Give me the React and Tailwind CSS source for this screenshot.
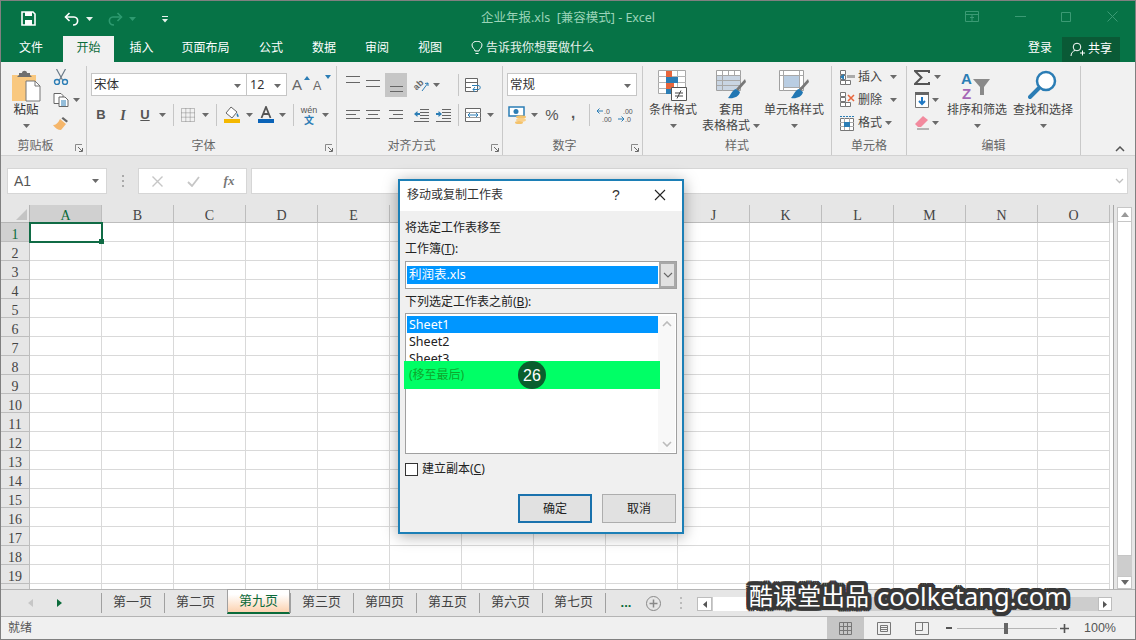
import React from "react";

const Caret = ({ c = "#6a6a6a" }) => (
  <svg width="7" height="4" viewBox="0 0 7 4" className="shrink-0"><path d="M0 0h7L3.500 4z" fill={c} /></svg>
);
const Box = ({ className = "", children }) => (
  <div className={`flex items-center justify-center shrink-0 ${className}`}>{children}</div>
);
const Sep = ({ className = "" }) => <div className={`w-px h-[22px] bg-[#c6c6c6] shrink-0 ${className}`} />;
const Launcher = () => (
  <svg width="8" height="8" viewBox="0 0 8 8">
    <path d="M0.500 7V0.500H7" fill="none" stroke="#8a8a8a" />
    <path d="M3 3l4 4M7.500 4v3.500H4" fill="none" stroke="#6a6a6a" />
  </svg>
);
const Lines = ({ ys, c = "#666" }) => (
  <svg width="16" height="18" viewBox="0 0 16 18">
    {ys.map(([y, a, b], i) => <path key={i} d={`M${a} ${y}.5H${b}`} stroke={c} />)}
  </svg>
);
const Group = ({ className, label, launcher, children }) => (
  <div className={`flex flex-col shrink-0 border-r border-[#c9c9c9] ${className}`}>
    <div className="h-[71px]">{children}</div>
    <div className="h-[15px] flex items-center text-[12px] leading-[15px] text-[#666]">
      <div className="flex-1 text-center pt-px">{label}</div>
      {launcher && <div className="w-[16px] pt-[6px] pl-[5px] flex justify-start"><Launcher /></div>}
    </div>
  </div>
);
const Big = ({ className, icon, l1, l2 }) => (
  <div className={`flex flex-col items-center pt-[4px] shrink-0 ${className}`}>
    <div className="h-[32px] flex items-start justify-center">{icon}</div>
    <div className="text-[12px] leading-[16px] text-[#444] whitespace-nowrap">{l1}</div>
    {l2 ? (
      <div className="text-[12px] leading-[16px] text-[#444] whitespace-nowrap flex items-center gap-[3px]">{l2}<Caret /></div>
    ) : (
      <div className="h-[16px] flex items-center"><Caret /></div>
    )}
  </div>
);

const CondIcon = () => (
  <svg width="32" height="32" viewBox="0 0 32 32">
    <path d="M1.500 .5h27v23h-27z" fill="#fff" stroke="#a8a8a8" />
    <path d="M1 6.500h28M1 12.500h28M1 18.500h28M9.500 1v23M20.500 1v23" stroke="#b5b5b5" fill="none" />
    <path d="M9 1h6v6H9z" fill="#e8663c" /><path d="M9 7h12v6H9z" fill="#2b7db5" /><path d="M9 13h8v6H9z" fill="#e8663c" /><path d="M9 19h5v5H9z" fill="#2b7db5" />
    <path d="M14.500 17.500h15v13h-15z" fill="#fff" stroke="#555" />
    <path d="M18 23h8M18 26h8M24 20.500l-4 8" stroke="#444" fill="none" />
  </svg>
);
const TableIcon = ({ full }) => (
  <svg width="30" height="30" viewBox="0 0 30 30">
    <path d="M.5 .5h24v20H.5z" fill="#fff" stroke="#a0a0a0" />
    {full ? <path d="M1 5h23v15H1z" fill="#c9d5e3" /> : <path d="M5 6h15v11H5z" fill="#b9cde2" />}
    {full
      ? <path d="M1 5.500h24M1 10.500h24M1 15.500h24M6.500 1v20M12.500 1v4M18.500 1v4" stroke="#a8a8a8" fill="none" />
      : <path d="M1 5.500h24M5 17.500h20M4.500 1v20M20.500 1v20" stroke="#a8a8a8" fill="none" />}
    <path d="M29 9l-9 10 2 2 8-9z" fill="#777" />
    <path d="M20 19c-4 1-5 6-8 9 5 1 11-1 12-6z" fill="#2277b3" />
  </svg>
);

const Ribbon = () => (
  <div className="h-[94px] shrink-0 bg-[#f1f1f1] border-b border-[#d2d2d2] flex pt-[4px]">
    <Group className="w-[86px]" label="剪贴板" launcher>
      <div className="flex">
        <div className="w-[50px] flex flex-col items-center pt-[4px]">
          <div className="h-[32px]">
            <svg width="30" height="32" viewBox="0 0 30 32">
              <path d="M1 5h24v26H1z" fill="#f9c87f" />
              <path d="M8 5V3h3c0-3 5-3 5 0h3v2l2 2H6z" fill="#6f6f6f" />
              <path d="M15 11h9l5 5v15H15z" fill="#fff" stroke="#777" />
              <path d="M24 11v5h5" fill="none" stroke="#777" />
            </svg>
          </div>
          <div className="text-[12.500px] leading-[16px] text-[#333]">粘贴</div>
          <div className="h-[16px] flex items-center"><Caret /></div>
        </div>
        <div className="flex flex-col">
          <Box className="h-[22px] w-[20px]">
            <svg width="16" height="16" viewBox="0 0 16 16"><path d="M3.500 0l6 11M12.500 0l-6 11" stroke="#6a7a88" strokeWidth="1.200" /><circle cx="4" cy="13" r="2.500" fill="none" stroke="#2b7db5" strokeWidth="1.400" /><circle cx="12" cy="13" r="2.500" fill="none" stroke="#2b7db5" strokeWidth="1.400" /></svg>
          </Box>
          <div className="h-[23px] flex items-center">
            <Box className="w-[20px]">
              <svg width="16" height="14" viewBox="0 0 16 14"><path d="M1 .5h7l2 2v8H1z" fill="#fff" stroke="#666" /><path d="M6 4h6l3 3v6.500H6z" fill="#fff" stroke="#666" /><path d="M8 8h5M8 10h5M8 12h5" stroke="#2b7db5" /></svg>
            </Box>
            <div className="ml-[2px]"><Caret /></div>
          </div>
          <Box className="h-[23px] w-[20px]">
            <svg width="16" height="14" viewBox="0 0 16 14"><path d="M10 1l5 4-1.500 1.500-5-4z" fill="#666" /><path d="M7 3l6 5-5 6c-3 0-6-2-8-5 3 0 5-2 7-6z" fill="#f5b66a" /></svg>
          </Box>
        </div>
      </div>
    </Group>

    <Group className="w-[250px]" label="字体" launcher>
      <div className="pt-[7px] flex flex-col">
        <div className="h-[23px] flex items-center ml-[4px]">
          <div className="w-[156px] h-[23px] bg-white border border-[#c6c6c6] flex items-center pl-[2px] pr-[5px] pt-[2px] text-[12.500px] text-[#333] justify-between">
            宋体<Caret />
          </div>
          <div className="w-[40px] h-[23px] bg-white border border-[#c6c6c6] border-l-0 flex items-center pl-[3px] pr-[5px] pt-[2px] text-[12.500px] text-[#333] justify-between">
            12<Caret />
          </div>
          <div className="ml-[5px] flex items-center gap-[3px] font-['Liberation_Sans',sans-serif]">
            <div className="w-[18px] relative text-[15px] leading-[20px] text-[#666]">A<svg width="6" height="4" viewBox="0 0 6 4" className="absolute top-[1px] right-0"><path d="M0 4L3 0l3 4z" fill="#2b7db5" /></svg></div>
            <div className="w-[18px] relative text-[12.500px] leading-[20px] pt-[2px] text-[#666]">A<svg width="6" height="4" viewBox="0 0 6 4" className="absolute top-[1px] right-0"><path d="M0 0h6L3 4z" fill="#2b7db5" /></svg></div>
          </div>
        </div>
        <div className="h-[24px] mt-[7px] flex items-center ml-[3px] text-[#555]">
          <Box className="w-[22px] font-['Liberation_Sans',sans-serif] font-bold text-[13px]">B</Box>
          <Box className="w-[22px] font-['Liberation_Serif',serif] italic font-bold text-[14px]">I</Box>
          <Box className="w-[22px] font-['Liberation_Sans',sans-serif] font-bold text-[13px] underline">U</Box>
          <Box className="w-[12px]"><Caret /></Box>
          <Sep className="ml-[5px]" />
          <Box className="w-[22px] ml-[3px]">
            <svg width="14" height="14" viewBox="0 0 14 14"><path d="M.5.500h13v13H.5zM.5 4.800h13M.5 9.200h13M4.800.5v13M9.200.5v13" fill="none" stroke="#888" strokeDasharray="1 1" /></svg>
          </Box>
          <Box className="w-[12px]"><Caret /></Box>
          <Sep className="ml-[5px]" />
          <Box className="w-[22px] ml-[4px]">
            <svg width="16" height="18" viewBox="0 0 16 18"><path d="M7 1l6 5-5 6-6-5z" fill="#fff" stroke="#666" /><path d="M13 7c2 2 2 4 1 4s-2-2-1-4z" fill="#2b7db5" /><path d="M0 13h16v4H0z" fill="#f4b800" /></svg>
          </Box>
          <Box className="w-[12px]"><Caret /></Box>
          <Box className="w-[22px]">
            <svg width="16" height="18" viewBox="0 0 16 18"><path d="M3.500 12L8 1l4.500 11M5 8h6" fill="none" stroke="#555" strokeWidth="1.800" /><path d="M0 13h16v4H0z" fill="#0a63b8" /></svg>
          </Box>
          <Box className="w-[11px]"><Caret /></Box>
          <Sep className="ml-[5px]" />
          <Box className="w-[22px] ml-[4px]">
            <div className="flex flex-col items-center text-[9px] leading-[9px] text-[#555]"><span className="font-['Liberation_Sans',sans-serif]">wén</span><span className="text-[#2b7db5] text-[10px] leading-[10px] font-bold">文</span></div>
          </Box>
          <Box className="w-[11px]"><Caret /></Box>
        </div>
      </div>
    </Group>

    <Group className="w-[166px]" label="对齐方式" launcher>
      <div className="pt-[7px] flex flex-col">
        <div className="h-[24px] flex items-center">
          <Box className="w-[20px] ml-[6px]"><Lines ys={[[0, 1, 15], [6, 1, 15]]} /></Box>
          <Box className="w-[20px]"><Lines ys={[[4, 1, 15], [10, 1, 15]]} /></Box>
          <Box className="w-[22px] h-[24px] ml-[2px] bg-[#c6c6c6]"><Lines ys={[[10, 2, 15], [15, 2, 15]]} /></Box>
          <Box className="w-[20px] ml-[4px]">
            <svg width="18" height="16" viewBox="0 0 18 16"><text x="1" y="11" fontSize="9" fontWeight="bold" fill="#666" fontFamily="Liberation Sans" transform="rotate(-45 6 8)">ab</text><path d="M10 14l6-8M16 6l-3 .5M16 6v3" stroke="#2b7db5" fill="none" /></svg>
          </Box>
          <Box className="w-[10px]"><Caret /></Box>
          <Sep className="ml-[17px]" />
          <Box className="w-[20px] ml-[4px]">
            <svg width="18" height="16" viewBox="0 0 18 16"><path d="M1.500 1.500h12v13h-12z" fill="#fff" stroke="#666" /><path d="M1 5.500h13M1 10.500h6" stroke="#666" /><path d="M8 8.500h6c3 0 3 4 0 4H9M11 10l-2 2.500 2 2.500" fill="none" stroke="#2b7db5" /></svg>
          </Box>
        </div>
        <div className="h-[24px] mt-[6px] flex items-center">
          <Box className="w-[20px] ml-[6px]"><Lines ys={[[4, 1, 15], [8, 1, 11], [12, 1, 15]]} /></Box>
          <Box className="w-[20px]"><Lines ys={[[4, 1, 15], [8, 3, 13], [12, 1, 15]]} /></Box>
          <Box className="w-[20px] ml-[3px]"><Lines ys={[[4, 1, 15], [8, 5, 15], [12, 1, 15]]} /></Box>
          <Box className="w-[20px] ml-[5px]">
            <svg width="16" height="14" viewBox="0 0 16 14"><path d="M7 1.500h9M7 4.500h9M7 7.500h9M7 10.500h9M1 13.500h15" stroke="#666" /><path d="M1 6l3.500-3v2H7v2H4.500v2z" fill="#2b7db5" /></svg>
          </Box>
          <Box className="w-[20px] ml-[2px]">
            <svg width="16" height="14" viewBox="0 0 16 14"><path d="M7 1.500h9M7 4.500h9M7 7.500h9M7 10.500h9M1 13.500h15" stroke="#666" /><path d="M7 6L3.500 3v2H1v2h2.500v2z" fill="#2b7db5" /></svg>
          </Box>
          <Sep className="ml-[5px]" />
          <Box className="w-[20px] ml-[4px]">
            <svg width="16" height="16" viewBox="0 0 16 16"><path d="M.5 1.500h15v13H.5z" fill="#fff" stroke="#666" /><path d="M.5 5.500h15M.5 10.500h15" stroke="#999" /><path d="M3 8h10M3 8l2-2M3 8l2 2M13 8l-2-2M13 8l-2 2" stroke="#2b7db5" fill="none" /></svg>
          </Box>
          <Box className="w-[12px] ml-[1px]"><Caret /></Box>
        </div>
      </div>
    </Group>

    <Group className="w-[140px]" label="数字" launcher>
      <div className="pt-[7px] flex flex-col">
        <div className="w-[130px] h-[23px] ml-[4px] bg-white border border-[#c6c6c6] flex items-center justify-between pl-[2px] pr-[5px] pt-[2px] text-[12.500px] text-[#333]">常规<Caret /></div>
        <div className="h-[24px] mt-[7px] flex items-center text-[#555]">
          <Box className="w-[22px] ml-[4px]">
            <svg width="20" height="18" viewBox="0 0 20 18"><path d="M1 1h15v9H1z" fill="#fff" stroke="#2b7db5" strokeWidth="1.500" /><circle cx="8" cy="5.500" r="2.500" fill="#2b7db5" /><ellipse cx="13" cy="11" rx="5" ry="1.800" fill="#f4c26b" /><ellipse cx="13" cy="14" rx="5" ry="1.800" fill="#f9d08a" /><ellipse cx="11" cy="16.500" rx="4" ry="1.500" fill="#f4c26b" /></svg>
          </Box>
          <Box className="w-[10px]"><Caret /></Box>
          <Box className="w-[20px] ml-[3px] text-[15px] font-['Liberation_Sans',sans-serif]">%</Box>
          <Box className="w-[20px] ml-[1px] text-[15px] font-bold font-['Liberation_Sans',sans-serif] pb-[3px]">,</Box>
          <Sep className="ml-[6px]" />
          <Box className="w-[20px] ml-[5px]">
            <svg width="18" height="16" viewBox="0 0 18 16"><path d="M7 4H1M1 4l2.500-2.500M1 4l2.500 2.500" stroke="#2b7db5" fill="none" /><text x="8" y="7" fontSize="7" fill="#555" fontFamily="Liberation Sans">.0</text><text x="6" y="15" fontSize="7" fill="#555" fontFamily="Liberation Sans">.00</text></svg>
          </Box>
          <Box className="w-[20px] ml-[1px]">
            <svg width="18" height="16" viewBox="0 0 18 16"><path d="M1 12h6M7 12L4.500 9.500M7 12l-2.500 2.500" stroke="#2b7db5" fill="none" /><text x="6" y="7" fontSize="7" fill="#555" fontFamily="Liberation Sans">.00</text><text x="8" y="15" fontSize="7" fill="#555" fontFamily="Liberation Sans">.0</text></svg>
          </Box>
        </div>
      </div>
    </Group>

    <Group className="w-[189px]" label="样式">
      <div className="flex">
        <Big className="w-[60px]" icon={<CondIcon />} l1="条件格式" />
        <Big className="w-[56px]" icon={<TableIcon full />} l1="套用" l2="表格格式" />
        <Big className="w-[70px]" icon={<TableIcon />} l1="单元格样式" />
      </div>
    </Group>

    <Group className="w-[75px]" label="单元格">
      <div className="flex flex-col text-[12px] text-[#444]">
        <div className="h-[22px] flex items-center">
          <Box className="w-[16px] ml-[7px]"><svg width="16" height="15" viewBox="0 0 16 15"><path d="M1.500.5h5v4h-5zM1.500 5.500h5v4h-5zM1.500 10.500h5v4h-5zM6.500 10.500h5v4h-5z" fill="#fff" stroke="#777" /><path d="M8 5h8v3H8z" fill="#aaa" /><path d="M1 7l4-3v6z" fill="#2b7db5" /></svg></Box>
          <div className="ml-[3px] w-[24px]">插入</div><div className="ml-[8px]"><Caret /></div>
        </div>
        <div className="h-[23px] flex items-center">
          <Box className="w-[16px] ml-[7px]"><svg width="16" height="15" viewBox="0 0 16 15"><path d="M1.500.5h5v4h-5zM1.500 5.500h5v4h-5zM1.500 10.500h5v4h-5zM6.500 10.500h5v4h-5z" fill="#fff" stroke="#777" /><path d="M9 3l6 6M15 3l-6 6" stroke="#e8663c" strokeWidth="1.500" /></svg></Box>
          <div className="ml-[3px] w-[24px]">删除</div><div className="ml-[8px]"><Caret /></div>
        </div>
        <div className="h-[23px] flex items-center">
          <Box className="w-[16px] ml-[7px]"><svg width="16" height="16" viewBox="0 0 16 16"><path d="M1.500 3.500h13v12h-13z" fill="#fff" stroke="#777" /><path d="M1 7.500h14M1 11.500h14M5.500 3v12M10.500 3v12" stroke="#aaa" /><path d="M5 7h6v5H5z" fill="#2b7db5" /><path d="M1 1.500h14" stroke="#2b7db5" strokeDasharray="2 1" /></svg></Box>
          <div className="ml-[3px] w-[24px]">格式</div><div className="ml-[3px]"><Caret /></div>
        </div>
      </div>
    </Group>

    <Group className="w-[174px]" label="编辑">
      <div className="flex">
        <div className="ml-[5px] w-[36px] flex flex-col">
          <div className="h-[22px] flex items-center"><Box className="w-[20px]"><svg width="16" height="15" viewBox="0 0 16 15"><path d="M15 3V1H1l6.500 6.500L1 14h14v-2" fill="none" stroke="#555" strokeWidth="2" /></svg></Box><div className="ml-[2px]"><Caret /></div></div>
          <div className="h-[23px] flex items-center"><Box className="w-[20px]"><svg width="14" height="16" viewBox="0 0 14 16"><path d="M.5.500h13v15H.5z" fill="#fff" stroke="#777" /><path d="M0 0h14v3H0z" fill="#666" /><path d="M7 5v6M4 9l3 3 3-3" stroke="#1f78c4" strokeWidth="2" fill="none" /></svg></Box><Caret /></div>
          <div className="h-[23px] flex items-center"><Box className="w-[20px]"><svg width="16" height="15" viewBox="0 0 16 15"><path d="M1 9l8-8 5 4-7 7H4z" fill="#f28a9e" /><path d="M3 14h12" stroke="#777" /></svg></Box><Caret /></div>
        </div>
        <Big className="w-[58px]" l1="排序和筛选" icon={
          <svg width="32" height="32" viewBox="0 0 32 32">
            <text x="0" y="14" fontSize="15" fontWeight="bold" fill="#2b7db5" fontFamily="Liberation Sans">A</text>
            <text x="1" y="29" fontSize="15" fontWeight="bold" fill="#a566b5" fontFamily="Liberation Sans">Z</text>
            <path d="M12 9h17l-6 8v8h-4v-8z" fill="#8a8a8a" />
          </svg>
        } />
        <Big className="w-[74px]" l1="查找和选择" icon={
          <svg width="30" height="30" viewBox="0 0 30 30"><circle cx="18" cy="11" r="9" fill="#fff" stroke="#2b7db5" strokeWidth="2.500" /><path d="M11 18L2 27" stroke="#2b7db5" strokeWidth="4" strokeLinecap="round" /></svg>
        } />
      </div>
    </Group>

    <div className="flex-1 flex items-end justify-end pr-[10px] pb-[3px]">
      <svg width="10" height="6" viewBox="0 0 10 6"><path d="M1 5l4-4 4 4" fill="none" stroke="#555" strokeWidth="1.500" /></svg>
    </div>
  </div>
);

const cols = ["A", "B", "C", "D", "E", "J", "K", "L", "M", "N", "O"];
const hiddenBefore = 5;
const rows = Array.from({ length: 20 }, (_, i) => i + 1);

const Sheet = () => (
  <div className="h-[384px] shrink-0 flex bg-[#e6e6e6] font-['Liberation_Serif',serif] text-[14px] text-[#444]">
    <div className="w-[1113px] shrink-0 overflow-hidden bg-white border-r border-[#a8a8a8]">
      <div className="h-[18px] flex bg-[#e6e6e6]">
        <div className="w-[29px] border-r border-b border-[#b5b5b5] shrink-0 relative flex items-end justify-end p-[2px]">
          <svg width="11" height="11" viewBox="0 0 11 11"><path d="M11 0v11H0z" fill="#c4c4c4" /></svg>
        </div>
        {cols.map((c, i) => (
          <React.Fragment key={c}>
            {i === hiddenBefore && [0, 1, 2, 3].map((k) => <div key={k} className="w-[72px] shrink-0 border-r border-b border-[#bdbdbd]" />)}
            <div className={`w-[72px] shrink-0 border-r border-b border-[#bdbdbd] text-center leading-[21px] ${i === 0 ? "bg-[#d0d0d0] text-[#0b6b3a] border-b-[#a0a0a0]" : ""}`}>{c}</div>
          </React.Fragment>
        ))}
      </div>
      {rows.map((r) => (
        <div key={r} className="h-[19px] flex">
          <div className={`w-[29px] shrink-0 border-r border-b border-[#bdbdbd] text-center leading-[24px] ${r === 1 ? "bg-[#d0d0d0] text-[#0b6b3a]" : "bg-[#e6e6e6]"}`}>{r < 20 ? r : ""}</div>
          {Array.from({ length: 15 }, (_, i) => (
            <div key={i} className="w-[72px] shrink-0 border-r border-b border-[#d9d9d9] relative">
              {r === 1 && i === 0 && (
                <div className="absolute left-[-1px] top-[-1px] w-[74px] h-[21px] border-2 border-[#106b45] z-10">
                  <div className="absolute right-[-3px] bottom-[-3px] w-[5px] h-[5px] bg-[#106b45]" />
                </div>
              )}
            </div>
          ))}
        </div>
      ))}
    </div>
    <div className="flex-1 flex flex-col pl-[3px] pr-[3px] pt-[2px]">
      <Box className="h-[15px] bg-white border border-[#c6c6c6]"><svg width="8" height="5" viewBox="0 0 8 5"><path d="M0 5l4-5 4 5z" fill="#999" /></svg></Box>
      <div className="h-[334px] bg-white border border-[#c6c6c6] border-t-0" />
      <div className="flex-1 bg-[#cdcdcd]" />
      <Box className="h-[13px] bg-white border border-[#c6c6c6]"><svg width="8" height="5" viewBox="0 0 8 5"><path d="M0 0h8L4 5z" fill="#666" /></svg></Box>
    </div>
  </div>
);

const tabs = ["第一页", "第二页", "第九页", "第三页", "第四页", "第五页", "第六页", "第七页"];

const Dialog = () => (
  <div className="absolute left-[397px] top-[178px] w-[286px] h-[355px] border-2 border-[#1c7fb6] bg-[#f0f0f0] shadow-[0_2px_14px_rgba(0,0,0,0.35)] text-[12px] text-[#222] flex flex-col z-20">
    <div className="h-[30px] bg-white flex items-center pl-[7px] pb-[2px] text-[#333] shrink-0">
      <span className="flex-1">移动或复制工作表</span>
      <span className="w-[14px] text-[14px] font-['Liberation_Sans',sans-serif] text-center mr-[31px]">?</span>
      <svg width="12" height="12" viewBox="0 0 12 12" className="mr-[16px]"><path d="M1 1l10 10M11 1L1 11" stroke="#222" strokeWidth="1.100" /></svg>
    </div>
    <div className="flex flex-col pl-[5px] pr-[5px]">
      <div className="mt-[8px] leading-[17px]">将选定工作表移至</div>
      <div className="mt-[4px] leading-[17px]">工作簿(<span className="underline">T</span>):</div>
      <div className="mt-[4px] h-[28px] bg-white border border-[#a0a0a0] flex items-stretch p-[3px] pr-0 pl-[1px]">
        <div className="flex-1 bg-[#0096ff] text-white leading-[18px] pl-[2px] text-[12.500px] my-[1px]">利润表.xls</div>
        <Box className="w-[17px] ml-[1px] -my-[3px] bg-[#e1e1e1] border-2 border-[#a8a8a8]">
          <svg width="10" height="6" viewBox="0 0 10 6"><path d="M1 1l4 4 4-4" fill="none" stroke="#666" strokeWidth="1.100" /></svg>
        </Box>
      </div>
      <div className="mt-[4px] leading-[17px]">下列选定工作表之前(<span className="underline">B</span>):</div>
      <div className="mt-[3px] h-[141px] bg-white border border-[#a0a0a0] flex pt-[2px] pl-px pr-px pb-px">
        <div className="flex-1 text-[12.500px] leading-[17px] text-[#222]">
          <div className="bg-[#0096ff] text-white pl-[2px] font-['Noto_Sans',sans-serif]">Sheet1</div>
          <div className="pl-[2px] font-['Noto_Sans',sans-serif]">Sheet2</div>
          <div className="pl-[2px] font-['Noto_Sans',sans-serif]">Sheet3</div>
        </div>
        <div className="w-[17px] bg-[#f8f8f8] flex flex-col justify-between items-center py-[5px]">
          <svg width="10" height="6" viewBox="0 0 10 6"><path d="M1 5l4-4 4 4" fill="none" stroke="#bbb" strokeWidth="1.600" /></svg>
          <svg width="10" height="6" viewBox="0 0 10 6"><path d="M1 1l4 4 4-4" fill="none" stroke="#bbb" strokeWidth="1.600" /></svg>
        </div>
      </div>
      <div className="mt-[8px] flex items-center h-[14px]">
        <div className="w-[13px] h-[13px] bg-white border border-[#333]" />
        <span className="ml-[4px]">建立副本(<span className="underline">C</span>)</span>
      </div>
      <div className="mt-[18px] pr-px flex justify-end gap-[10px]">
        <Box className="w-[74px] h-[29px] bg-[#e1e1e1] border-2 border-[#1a72ad]">确定</Box>
        <Box className="w-[74px] h-[29px] bg-[#e1e1e1] border border-[#adadad]">取消</Box>
      </div>
    </div>
    <div className="absolute left-[4px] top-[180px] w-[256px] h-[28px] bg-[#00ff66] flex items-center pl-[5px] text-[#0fa62c] text-[12px]">
      (移至最后)
    </div>
    <div className="absolute left-[118px] top-[180px] w-[28px] h-[28px] rounded-full bg-[#0a5e2e] text-white flex items-center justify-center pt-px text-[16px] font-['Liberation_Sans',sans-serif]">26</div>
  </div>
);

export default function App() {
  return (
    <div className="relative w-[1136px] h-[640px] overflow-hidden border border-[#808080] bg-[#e6e6e6] flex flex-col font-['Noto_Sans','Noto_Sans_CJK_SC',sans-serif]">
      {/* title bar */}
      <div className="h-[35px] shrink-0 bg-[#067346] flex items-center relative">
        <Box className="w-[16px] ml-[19px]">
          <svg width="15" height="15" viewBox="0 0 15 15"><path d="M1 1h11l2 2v11H1z" fill="none" stroke="#fff" strokeWidth="1.600" /><path d="M4 1h7v4H4z" fill="#fff" /><path d="M4 9h7v5H4z" fill="#fff" /></svg>
        </Box>
        <Box className="w-[16px] ml-[28px]">
          <svg width="16" height="14" viewBox="0 0 16 14"><path d="M2 5h8c5 0 5 8-1 8" fill="none" stroke="#fff" strokeWidth="1.600" /><path d="M5.500 1L1.500 5l4 4" fill="none" stroke="#fff" strokeWidth="1.600" /></svg>
        </Box>
        <div className="ml-[6px]"><Caret c="#e8f3ee" /></div>
        <Box className="w-[16px] ml-[14px]">
          <svg width="16" height="14" viewBox="0 0 16 14"><path d="M14 5H6c-5 0-5 8 1 8" fill="none" stroke="#2e9a70" strokeWidth="1.600" /><path d="M10.500 1l4 4-4 4" fill="none" stroke="#2e9a70" strokeWidth="1.600" /></svg>
        </Box>
        <div className="ml-[6px]"><Caret c="#2e9a70" /></div>
        <Box className="w-[8px] ml-[25px]">
          <svg width="8" height="8" viewBox="0 0 8 8"><path d="M1 1.500h6" stroke="#e8f3ee" /><path d="M1 4h6L4 7.500z" fill="#e8f3ee" /></svg>
        </Box>
        <div className="absolute left-0 right-0 text-center text-[12.500px] text-[#9ad3b8] whitespace-pre pointer-events-none">企业年报.xls  [兼容模式] - Excel</div>
        <div className="ml-auto mb-[4px] flex items-center text-[#3b9a74]">
          <svg width="14" height="11" viewBox="0 0 14 11"><path d="M.5.500h13v10H.5zM.5 3.500h13M7 3.500v7" fill="none" stroke="currentColor" /><path d="M5 6.500h4" stroke="currentColor" /></svg>
          <svg width="11" height="1" viewBox="0 0 11 1" className="ml-[36px]"><path d="M0 .5h11" stroke="currentColor" /></svg>
          <svg width="10" height="10" viewBox="0 0 10 10" className="ml-[35px]"><path d="M.5.500h9v9h-9z" fill="none" stroke="currentColor" /></svg>
          <svg width="11" height="11" viewBox="0 0 11 11" className="ml-[36px] mr-[17px]"><path d="M.5.500l10 10M10.500.5l-10 10" stroke="currentColor" /></svg>
        </div>
      </div>
      {/* tabs */}
      <div className="h-[26px] shrink-0 bg-[#067346] flex text-[12px] text-white items-stretch">
        <div className="w-[62px] pr-[2px] pb-[2px] flex items-center justify-center">文件</div>
        <div className="w-[51px] pb-[2px] bg-[#f1f1f1] text-[#0b6b3a] flex items-center justify-center">开始</div>
        <div className="w-[55px] pb-[2px] flex items-center justify-center">插入</div>
        <div className="w-[73px] pb-[2px] flex items-center justify-center">页面布局</div>
        <div className="w-[58px] pb-[2px] flex items-center justify-center">公式</div>
        <div className="w-[48px] pb-[2px] flex items-center justify-center">数据</div>
        <div className="w-[58px] pb-[2px] flex items-center justify-center">审阅</div>
        <div className="w-[48px] pb-[2px] flex items-center justify-center">视图</div>
        <div className="ml-[17px] pb-[2px] flex items-center text-[#e6f2ec]">
          <svg width="12" height="15" viewBox="0 0 12 15"><path d="M4 10c0-2-3-3-3-6a5 3.800 0 0 1 10 0c0 3-3 4-3 6zM4.500 12.500h3" fill="none" stroke="#fff" /></svg>
          <span className="ml-[3px]">告诉我你想要做什么</span>
        </div>
        <div className="ml-auto flex items-center mr-[15px]">
          <span className="mr-[10px] pb-[2px]">登录</span>
          <div className="w-[58px] h-[25px] bg-[#0a5a36] flex items-center justify-center gap-[3px]">
            <svg width="15" height="15" viewBox="0 0 15 15"><circle cx="7" cy="5" r="3.800" fill="none" stroke="#fff" /><path d="M1 14c0-3 2-5 4-5.500M10 11h5M12.500 8.500v5" fill="none" stroke="#fff" /></svg>
            共享
          </div>
        </div>
      </div>
      <Ribbon />
      {/* formula bar */}
      <div className="h-[49px] shrink-0 bg-[#e6e6e6] flex items-start pt-[12px]">
        <div className="ml-[6px] w-[100px] h-[26px] bg-white border border-[#d6d6d6] flex items-center justify-between pl-[6px] pr-[7px] text-[14px] text-[#555] font-['Liberation_Sans',sans-serif]">A1<Caret /></div>
        <div className="ml-[15px] w-[3px] h-[26px] flex flex-col justify-center gap-[3px]">
          <div className="w-[2px] h-[2px] bg-[#aaa]" /><div className="w-[2px] h-[2px] bg-[#aaa]" /><div className="w-[2px] h-[2px] bg-[#aaa]" />
        </div>
        <div className="ml-[13px] w-[109px] h-[26px] bg-white border border-[#d6d6d6] flex items-center">
          <Box className="w-[36px]"><svg width="11" height="11" viewBox="0 0 11 11"><path d="M.5.500l10 10M10.500.5l-10 10" stroke="#c6c6c6" strokeWidth="1.400" /></svg></Box>
          <Box className="w-[36px]"><svg width="13" height="11" viewBox="0 0 13 11"><path d="M1 6l4 4 7-9" fill="none" stroke="#c6c6c6" strokeWidth="1.800" /></svg></Box>
          <Box className="w-[36px] font-['Liberation_Serif',serif] italic font-bold text-[13px] text-[#777]">fx</Box>
        </div>
        <div className="ml-[4px] w-[877px] h-[26px] bg-white border border-[#d6d6d6] flex items-center justify-end pr-[3px]">
          <svg width="9" height="6" viewBox="0 0 9 6"><path d="M1 1l3.500 3.500L8 1" fill="none" stroke="#c0c0c0" strokeWidth="1.300" /></svg>
        </div>
      </div>
      <Sheet />
      {/* sheet tabs */}
      <div className="h-[28px] shrink-0 bg-[#e6e6e6] border-t border-b border-[#b4b4b4] flex items-start text-[13px] text-[#444]">
        <div className="w-[100px] h-[26px] shrink-0 flex items-center">
          <svg width="5" height="8" viewBox="0 0 5 8" className="ml-[27px]"><path d="M5 0v8L0 4z" fill="#c6c6c6" /></svg>
          <svg width="5" height="8" viewBox="0 0 5 8" className="ml-[24px]"><path d="M0 0v8l5-4z" fill="#0b6b3a" /></svg>
        </div>
        {tabs.map((t, i) =>
          i === 2 ? (
            <div key={t} className="w-[63px] h-[25px] pb-px -mt-px shrink-0 border-x border-t border-[#a0a0a0] border-b-2 border-b-[#0b6b3a] bg-[linear-gradient(#ffffff_20%,#fcd2b0)] text-[#0b6b3a] flex items-center justify-center">{t}</div>
          ) : (
            <div key={t} className="w-[63px] h-[26px] pb-[3px] shrink-0 flex items-center justify-center relative">
              <div className="absolute left-0 top-[3px] h-[20px] w-px bg-[#a0a0a0]" />
              {t}
            </div>
          )
        )}
        <div className="h-[26px] w-px shrink-0 flex items-center"><div className="h-[20px] w-px bg-[#a0a0a0]" /></div>
        <div className="w-[40px] h-[26px] text-center text-[#0b6b3a] font-bold leading-[26px] shrink-0 font-['Liberation_Sans',sans-serif]">...</div>
        <Box className="w-[16px] h-[26px] ml-[-1px]"><svg width="15" height="15" viewBox="0 0 15 15"><circle cx="7.500" cy="7.500" r="7" fill="none" stroke="#888" /><path d="M3.500 7.500h8M7.500 3.500v8" stroke="#888" strokeWidth="1.500" /></svg></Box>
        <div className="ml-[19px] w-[3px] h-[26px] flex flex-col justify-center gap-[3px]">
          <div className="w-[2px] h-[2px] bg-[#bbb]" /><div className="w-[2px] h-[2px] bg-[#bbb]" /><div className="w-[2px] h-[2px] bg-[#bbb]" />
        </div>
        <div className="ml-[14px] mt-[7px] w-[415px] h-[14px] bg-[#cdcdcd] flex justify-between shrink-0">
          <div className="flex">
            <Box className="w-[15px] bg-white border border-[#bdbdbd]"><svg width="4" height="7" viewBox="0 0 4 7"><path d="M4 0v7L0 3.500z" fill="#555" /></svg></Box>
            <div className="w-[60px] ml-px bg-white" />
          </div>
          <Box className="w-[14px] bg-white border border-[#bdbdbd]"><svg width="4" height="7" viewBox="0 0 4 7"><path d="M0 0v7l4-3.500z" fill="#555" /></svg></Box>
        </div>
      </div>
      {/* status */}
      <div className="flex-1 bg-[#f0f0f0] flex items-stretch text-[12px] text-[#555]">
        <div className="pl-[7px] flex items-center">就绪</div>
        <div className="ml-auto flex items-stretch">
          <Box className="w-[37px] bg-[#c6c6c6]"><svg width="13" height="13" viewBox="0 0 13 13"><path d="M.5.500h12v12H.5zM.5 4.500h12M.5 8.500h12M4.500.5v12M8.500.5v12" fill="none" stroke="#777" /></svg></Box>
          <Box className="w-[39px]"><svg width="14" height="13" viewBox="0 0 14 13"><path d="M.5.500h13v12H.5z" fill="none" stroke="#777" /><path d="M3.500 3.500h7v6h-7zM3.500 5.500h7M3.500 7.500h7" fill="none" stroke="#777" /></svg></Box>
          <Box className="w-[37px]"><svg width="14" height="13" viewBox="0 0 14 13"><path d="M.5.500h13v12H.5zM.5 8.500h7V.5" fill="none" stroke="#777" /></svg></Box>
          <div className="flex items-center ml-[6px]">
            <div className="w-[6px] h-[2px] bg-[#555]" />
            <div className="w-[100px] ml-[5px] h-px bg-[#b5b5b5] relative">
              <div className="absolute left-[47px] top-[-5px] w-[4px] h-[11px] bg-[#666]" />
            </div>
            <svg width="9" height="9" viewBox="0 0 9 9" className="ml-[3px]"><path d="M0 4.500h9M4.500 0v9" stroke="#555" strokeWidth="1.600" /></svg>
          </div>
          <div className="w-[66px] pl-[15px] flex items-center text-[12.500px] font-['Liberation_Sans',sans-serif]">100%</div>
        </div>
      </div>
      <Dialog />
      <div className="absolute left-[748px] top-[579px] z-30 flex items-center whitespace-nowrap text-white text-[24px] leading-[32px] [text-shadow:4px_0_#383838,-4px_0_#383838,0_4px_#383838,0_-4px_#383838,3px_3px_#383838,-3px_3px_#383838,3px_-3px_#383838,-3px_-3px_#383838,2px_0_#383838,-2px_0_#383838,0_2px_#383838,0_-2px_#383838,2px_2px_#383838,-2px_2px_#383838,2px_-2px_#383838,-2px_-2px_#383838,4px_2px_#383838,-4px_2px_#383838,4px_-2px_#383838,-4px_-2px_#383838,2px_4px_#383838,-2px_4px_#383838,2px_-4px_#383838,-2px_-4px_#383838]">
        酷课堂出品<span className="ml-[8px] text-[25.500px] font-['Noto_Sans',sans-serif]">coolketang.com</span>
      </div>
    </div>
  );
}
